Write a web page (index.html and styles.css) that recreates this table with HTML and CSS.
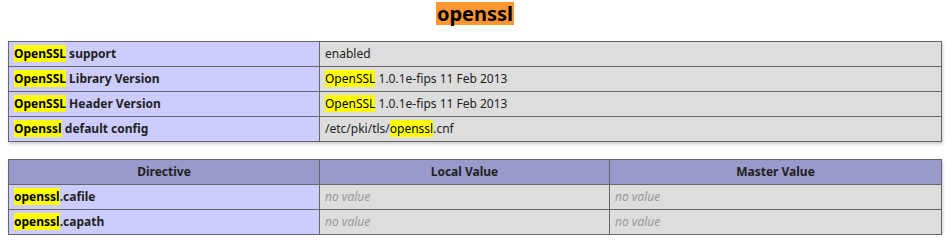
FILE: index.html
```html
<!DOCTYPE html>
<html>
<head>
<meta charset="utf-8">
<link rel="stylesheet" href="styles.css">
</head>
<body>
<div class="center">
<h2><a name="module_openssl"><mark class="cur">openssl</mark></a></h2>
<table class="t1">
<tr><td class="e"><mark>OpenSSL</mark> support </td><td class="v">enabled </td></tr>
<tr><td class="e"><mark>OpenSSL</mark> Library Version </td><td class="v"><mark>OpenSSL</mark> 1.0.1e-fips 11 Feb 2013 </td></tr>
<tr><td class="e"><mark>OpenSSL</mark> Header Version </td><td class="v"><mark>OpenSSL</mark> 1.0.1e-fips 11 Feb 2013 </td></tr>
<tr><td class="e"><mark>Openssl</mark> default config </td><td class="v">/etc/pki/tls/<mark>openssl</mark>.cnf </td></tr>
</table>
<table class="t2">
<tr class="h"><th class="c1">Directive</th><th class="c2">Local Value</th><th class="c3">Master Value</th></tr>
<tr><td class="e"><mark>openssl</mark>.cafile</td><td class="v"><i>no value</i></td><td class="v"><i>no value</i></td></tr>
<tr><td class="e"><mark>openssl</mark>.capath</td><td class="v"><i>no value</i></td><td class="v"><i>no value</i></td></tr>
</table>
</div>
</body>
</html>
```
FILE: styles.css
```css
html, body {
  margin: 0;
  padding: 0;
  background: #fff;
}
body {
  font-family: "Noto Sans", "Open Sans", sans-serif;
  color: #222;
}
.center {
  display: flex;
  flex-direction: column;
  align-items: center;
  padding-top: 2px;
}
h2 {
  margin: 0;
  font-size: 20px;
  line-height: 23px;
  font-weight: bold;
}
h2 a {
  color: #000;
  text-decoration: none;
}
mark {
  background: #ffff00;
  color: #000;
  padding: 0;
}
mark.cur {
  background: #ff9632;
  color: #000;
  display: inline-block;
  padding: 0 1px;
}
table {
  border-collapse: collapse;
  border: 0;
  width: 934px;
  box-shadow: 1px 2px 3px #ccc;
}
.t1 {
  margin-top: 16px;
}
.t2 {
  margin-top: 17px;
}
td, th {
  border: 1px solid #666;
  font-size: 12px;
  line-height: 16px;
  padding: 4px 5px;
  vertical-align: baseline;
  text-align: left;
}
.e {
  background-color: #ccf;
  width: 300px;
  font-weight: bold;
}
.v {
  background-color: #ddd;
  font-weight: normal;
}
.v i {
  color: #999;
}
tr.h th {
  background-color: #99c;
  font-weight: bold;
  text-align: center;
}
.c1 { width: 300px; }
.c2 { width: 279px; }
```
